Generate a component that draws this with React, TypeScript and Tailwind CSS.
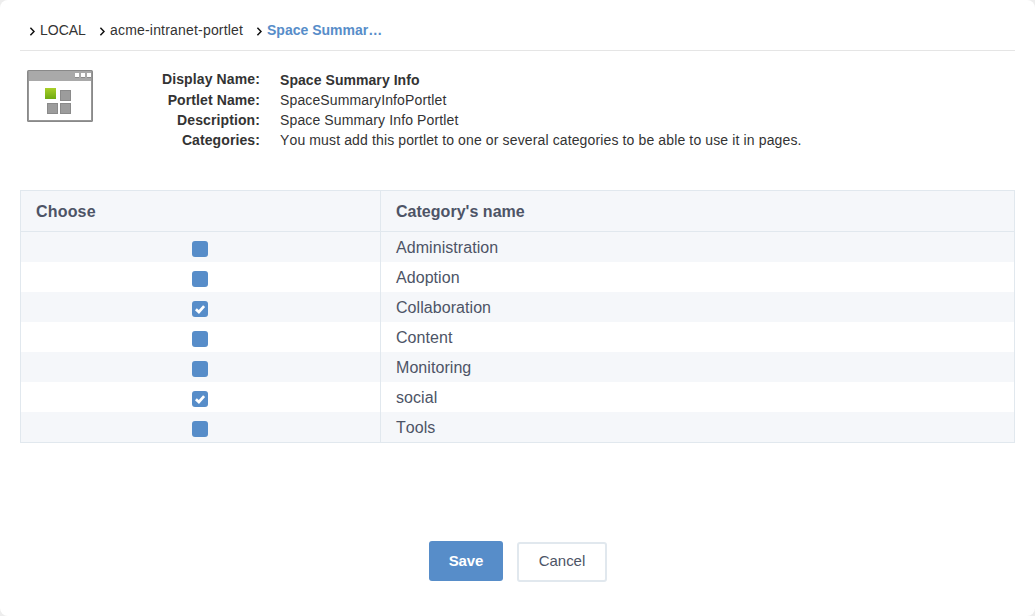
import React from "react";

const details = [
  { label: "Portlet Name:", value: "SpaceSummaryInfoPortlet" },
  { label: "Description:", value: "Space Summary Info Portlet" },
  {
    label: "Categories:",
    value: "You must add this portlet to one or several categories to be able to use it in pages.",
  },
];

const categories = [
  { name: "Administration", checked: false },
  { name: "Adoption", checked: false },
  { name: "Collaboration", checked: true },
  { name: "Content", checked: false },
  { name: "Monitoring", checked: false },
  { name: "social", checked: true },
  { name: "Tools", checked: false },
];

function Chevron() {
  return (
    <svg width="6" height="9" viewBox="0 0 6 9" fill="none" stroke="#111" strokeWidth="1.5" className="mt-[2px] mr-[5px] -ml-px shrink-0">
      <path d="M1.4 0.8 L5 4.5 L1.4 8.2" />
    </svg>
  );
}

function PortletIcon() {
  return (
    <svg width="66" height="52" viewBox="0 0 66 52" className="mt-[19px] ml-[7px] block shrink-0">
      <defs>
        <linearGradient id="green" x1="0" y1="0" x2="0" y2="1">
          <stop offset="0" stopColor="#a9cf28" />
          <stop offset="1" stopColor="#6faa12" />
        </linearGradient>
      </defs>
      <rect width="66" height="52" rx="1.5" fill="#898989" />
      <rect x="1" y="1" width="64" height="50" fill="#979797" />
      <rect x="2" y="1" width="62" height="10" fill="#a9a9a9" />
      <rect x="2" y="11" width="62" height="39" fill="#fff" />
      <path d="M48 7.5h4M54 7.5h4M60 7.5h4" stroke="#8c8c8c" />
      <path d="M48 3h4v4h-4zM54 3h4v4h-4zM60 3h4v4h-4z" fill="#fff" />
      <rect x="18" y="18" width="11" height="11" fill="url(#green)" />
      <g fill="#9c9c9c" stroke="#8a8a8a">
        <rect x="33.5" y="20.5" width="10" height="10" />
        <rect x="20.5" y="33.5" width="10" height="10" />
        <rect x="33.5" y="33.5" width="10" height="10" />
      </g>
    </svg>
  );
}

function Checkbox({ checked }: { checked: boolean }) {
  return (
    <span role="checkbox" aria-checked={checked} className="mt-[3px] flex size-4 items-center justify-center rounded-[3px] bg-[#578dc9]">
      {checked && (
        <svg width="16" height="16" viewBox="0 0 16 16" fill="none" stroke="#fff" strokeWidth="2.7">
          <path d="M3.9 8.2 L6.9 11 L12.1 5.2" />
        </svg>
      )}
    </span>
  );
}

export default function App() {
  return (
    <div className="h-[616px] w-full bg-[#ededed]">
      <main className="flex h-full flex-col rounded-lg bg-white px-5 font-['Liberation_Sans',Arial,sans-serif] text-sm leading-5 text-[#333] [font-kerning:none]">
        <nav className="flex h-[51px] shrink-0 items-center border-b border-[#e5e5e5] pt-[10px] pl-[10px]">
          <div className="flex w-[70px] items-center"><Chevron />LOCAL</div>
          <div className="flex w-[157px] items-center tracking-[0.19px] whitespace-nowrap"><Chevron />acme-intranet-portlet</div>
          <div className="flex items-center font-bold text-[#578dc9]"><Chevron />Space Summar…</div>
        </nav>

        <section className="flex h-[139px] shrink-0">
          <PortletIcon />
          <dl className="mt-[18px] ml-[27px] grid auto-rows-[20px] grid-cols-[140px_auto] content-start gap-x-5">
            <dt className="text-right font-bold tracking-[0.12px]">Display Name:</dt>
            <dd className="pt-px font-bold tracking-[0.06px]">Space Summary Info</dd>
            {details.map((d) => (
              <React.Fragment key={d.label}>
                <dt className="pt-px text-right font-bold tracking-[0.1px]">{d.label}</dt>
                <dd className="pt-px tracking-[0.13px] whitespace-nowrap">{d.value}</dd>
              </React.Fragment>
            ))}
          </dl>
        </section>

        <section className="shrink-0 border border-[#e1e8ee] text-base tracking-[0.06px] text-[#4d5466]">
          <div className="grid h-[41px] grid-cols-[360px_1fr] border-b border-[#e1e8ee] bg-[#f5f7fa] font-bold">
            <div className="flex items-center border-r border-[#e1e8ee] pt-[2px] pl-[15px] tracking-[0.18px]">Choose</div>
            <div className="flex items-center pt-[2px] pl-[15px] tracking-[0.03px]">Category's name</div>
          </div>
          {categories.map((c) => (
            <div key={c.name} className="grid h-[30px] grid-cols-[360px_1fr] odd:bg-white even:bg-[#f5f7fa]">
              <div className="flex items-center justify-center border-r border-[#e1e8ee] pr-[2px]"><Checkbox checked={c.checked} /></div>
              <div className="flex items-center pt-[2px] pl-[15px]">{c.name}</div>
            </div>
          ))}
        </section>

        <footer className="mt-[98px] flex justify-center gap-[14px] text-[15px]">
          <button className="h-10 w-[74px] rounded-[3px] bg-[#578dc9] pl-px font-bold tracking-[-0.1px] text-white">Save</button>
          <button className="mt-px h-10 w-[90px] rounded-[3px] border-2 border-[#e1e8ee] bg-white pb-0.5 pl-px tracking-[-0.05px] text-[#4d5466]">Cancel</button>
        </footer>
      </main>
    </div>
  );
}
